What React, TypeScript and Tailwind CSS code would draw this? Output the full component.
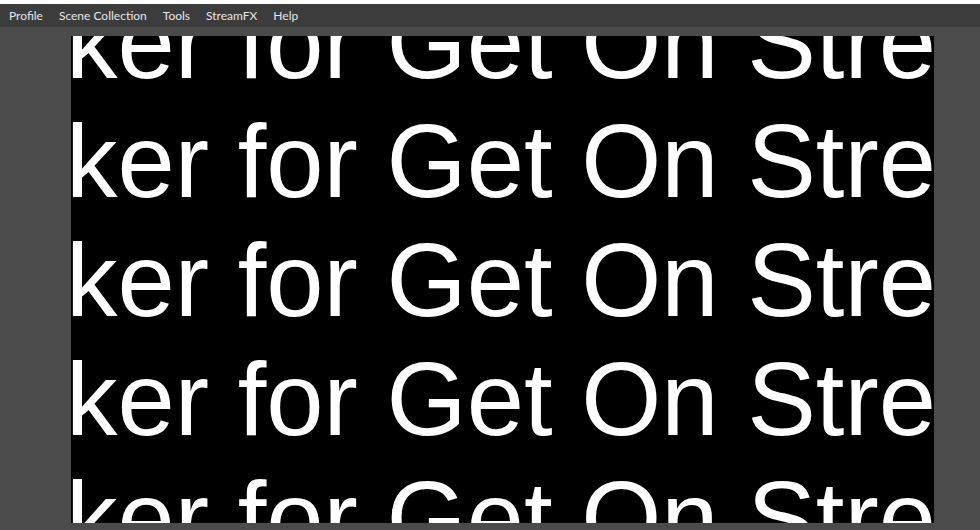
import React from 'react';

const menu = ['Profile', 'Scene Collection', 'Tools', 'StreamFX', 'Help'];

const rows = [0, 1, 2, 3, 4];

export default function App() {
  return (
    <div className="w-[980px] h-[530px] bg-white flex flex-col overflow-hidden">
      {/* Menu bar */}
      <div className="mt-[4px] h-[23px] bg-[#3c3c3c] flex items-center gap-4 pl-[9px] pt-px font-['Lato',sans-serif] text-[12px] text-[#e6e6e6]">
        {menu.map(m => (
          <span key={m} className="whitespace-nowrap">{m}</span>
        ))}
      </div>

      {/* Preview area */}
      <div className="flex-1 bg-[#4b4b4b] pt-[9px] pl-[71px]">
        <div className="w-[863px] h-[487px] bg-black overflow-hidden">
          <div className="-mt-[53px] -ml-[5px] flex flex-col font-['Liberation_Sans',Arial,sans-serif] text-[103px] leading-[119px] text-white">
            {rows.map(r => (
              <div key={r} className="whitespace-nowrap">ker for Get On Stream</div>
            ))}
          </div>
        </div>
      </div>
    </div>
  );
}
